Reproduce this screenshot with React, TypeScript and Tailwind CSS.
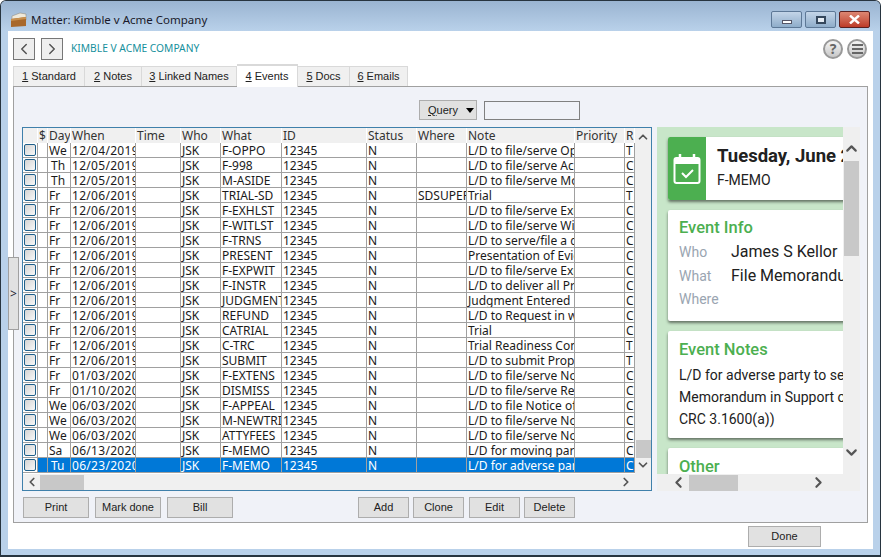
import { ChevronLeft, ChevronRight, ChevronUp, ChevronDown } from 'lucide-react'

const COLS = ['w-[15px]', 'w-[10px]', 'w-[23px]', 'w-[65px]', 'w-[45px]', 'w-[40px]', 'w-[61px]', 'w-[85px]', 'w-[50px]', 'w-[50px]', 'w-[108px]', 'w-[50px]', 'w-[10px]']

const HEAD = ['', '$', 'Day', 'When', 'Time', 'Who', 'What', 'ID', 'Status', 'Where', 'Note', 'Priority', 'R']

const EVENTS = [
  ['We', '12/04/2019', 'F-OPPO', '', 'L/D to file/serve Opposition', 'T'],
  ['Th', '12/05/2019', 'F-998', '', 'L/D to file/serve Acceptance', 'C'],
  ['Th', '12/05/2019', 'M-ASIDE', '', 'L/D to file/serve Motion', 'C'],
  ['Fr', '12/06/2019', 'TRIAL-SD', 'SDSUPERIOR', 'Trial', 'T'],
  ['Fr', '12/06/2019', 'F-EXHLST', '', 'L/D to file/serve Exhibit', 'C'],
  ['Fr', '12/06/2019', 'F-WITLST', '', 'L/D to file/serve Witness', 'C'],
  ['Fr', '12/06/2019', 'F-TRNS', '', 'L/D to serve/file a copy', 'C'],
  ['Fr', '12/06/2019', 'PRESENT', '', 'Presentation of Evidence', 'C'],
  ['Fr', '12/06/2019', 'F-EXPWIT', '', 'L/D to file/serve Expert', 'C'],
  ['Fr', '12/06/2019', 'F-INSTR', '', 'L/D to deliver all Proposed', 'C'],
  ['Fr', '12/06/2019', 'JUDGMENT', '', 'Judgment Entered', 'C'],
  ['Fr', '12/06/2019', 'REFUND', '', 'L/D to Request in writing', 'C'],
  ['Fr', '12/06/2019', 'CATRIAL', '', 'Trial', 'C'],
  ['Fr', '12/06/2019', 'C-TRC', '', 'Trial Readiness Conference', 'T'],
  ['Fr', '12/06/2019', 'SUBMIT', '', 'L/D to submit Proposed', 'T'],
  ['Fr', '01/03/2020', 'F-EXTENS', '', 'L/D to file/serve Notice', 'C'],
  ['Fr', '01/10/2020', 'DISMISS', '', 'L/D to file/serve Request', 'C'],
  ['We', '06/03/2020', 'F-APPEAL', '', 'L/D to file Notice of Appeal', 'C'],
  ['We', '06/03/2020', 'M-NEWTRIAL', '', 'L/D to file/serve Notice', 'C'],
  ['We', '06/03/2020', 'ATTYFEES', '', 'L/D to file/serve Notice', 'C'],
  ['Sa', '06/13/2020', 'F-MEMO', '', 'L/D for moving party', 'C'],
  ['Tu', '06/23/2020', 'F-MEMO', '', 'L/D for adverse party', 'C'],
]

const TABS = [
  { n: '1', label: 'Standard', w: 'w-[72px]' },
  { n: '2', label: 'Notes', w: 'w-[57px]' },
  { n: '3', label: 'Linked Names', w: 'w-[95px]' },
  { n: '4', label: 'Events', w: 'w-[61px]', active: true },
  { n: '5', label: 'Docs', w: 'w-[52px]' },
  { n: '6', label: 'Emails', w: 'w-[58px]' },
]

function Btn({ label, w }: { label: string; w: string }) {
  return (
    <button className={`${w} h-[21px] bg-[#e1e1e1] border border-[#adadad] font-['Liberation_Sans',sans-serif] text-[11px] text-[#222] flex items-center justify-center`}>
      {label}
    </button>
  )
}

function Cell({ text, i, selected }: { text: string; i: number; selected: boolean }) {
  const nudge = i === 2 && text.startsWith('T') ? 'pl-[3px]' : 'pl-[1px]'
  return (
    <div className={`${COLS[i]} shrink-0 overflow-hidden whitespace-nowrap border-r border-b border-[#a0a0a0] pt-[1px] ${nudge} leading-[14px] ${i === 3 ? 'tracking-[0.3px]' : ''} ${selected ? 'text-white' : ''}`}>
      {text}
    </div>
  )
}

function Card({ title, children, h, pt }: { title: string; children?: React.ReactNode; h: string; pt: string }) {
  return (
    <div className={`${h} ${pt} w-[240px] bg-white rounded-[2px] shadow-[0_2px_3px_rgba(0,0,0,0.5)] pl-[11px] shrink-0`}>
      <div className="text-[16.5px] leading-[20px] font-medium text-[#4caf50]">{title}</div>
      {children}
    </div>
  )
}

function GridTable() {
  return (
    <div className="w-[630px] h-[364px] shrink-0 border border-[#3f80ab] flex flex-col bg-[#f0f0f0] font-['Noto_Sans',sans-serif] text-[12px] text-[#1a1a1a]">
      <div className="flex flex-1 min-h-0">
        <div className="w-[612px] shrink-0 flex flex-col bg-white">
          <div className="flex h-[15px] bg-[#f0f0f0]">
            {HEAD.map((h, i) => (
              <div key={i} className={`${COLS[i]} shrink-0 overflow-hidden whitespace-nowrap border-r border-white pt-[1px] pl-[1px] leading-[14px] text-[#333]`}>{h}</div>
            ))}
          </div>
          {EVENTS.map((e, r) => {
            const selected = r === EVENTS.length - 1
            const vals = ['', '', e[0], e[1], '', 'JSK', e[2], '12345', 'N', e[3], e[4], '', e[5]]
            return (
              <div key={r} className={`flex h-[15px] ${selected ? 'bg-[#0078d7]' : ''}`}>
                {vals.map((v, i) => i === 0 ? (
                  <div key={i} className="w-[15px] shrink-0 bg-white border-r border-b border-[#a0a0a0] flex items-center justify-center">
                    <div className="w-[12px] h-[12px] rounded-[2px] border border-[#1f5f8a] bg-gradient-to-br from-[#d4d4d4] to-[#f8f8f8]" />
                  </div>
                ) : (
                  <Cell key={i} text={v} i={i} selected={selected} />
                ))}
              </div>
            )
          })}
        </div>
        <div className="flex-1 flex flex-col items-center bg-[#f0f0f0]">
          <ChevronUp size={14} strokeWidth={3} className="text-[#555] mt-[2px]" />
          <div className="flex-1" />
          <div className="w-[15px] h-[18px] bg-[#c8c8c8]" />
          <ChevronDown size={14} strokeWidth={3} className="text-[#555] mb-[2px]" />
        </div>
      </div>
      <div className="h-[16px] flex items-center">
        <ChevronLeft size={14} strokeWidth={3} className="text-[#555] ml-[2px]" />
        <div className="w-[44px] h-[15px] bg-[#c8c8c8] ml-[1px]" />
        <div className="flex-1" />
        <ChevronRight size={14} strokeWidth={3} className="text-[#555] mr-[18px]" />
      </div>
    </div>
  )
}

function SidePanel() {
  return (
    <div className="w-[203px] h-[364px] shrink-0 flex flex-col bg-[#efefef] font-['Roboto',sans-serif]">
      <div className="flex flex-1 min-h-0">
        <div className="w-[186px] shrink-0 bg-[#c8e6c9] overflow-hidden pl-[11px] pt-[10px] flex flex-col gap-[10px]">
          <div className="w-[240px] h-[63px] shrink-0 bg-white rounded-[2px] shadow-[0_2px_3px_rgba(0,0,0,0.5)] flex">
            <div className="w-[38px] shrink-0 bg-[#4caf50] rounded-l-[2px] flex items-center justify-center">
              <svg width="28" height="31" viewBox="0 0 28 31" fill="none" stroke="white" strokeWidth="2">
                <rect x="1.5" y="5" width="25" height="25" rx="2" />
                <path d="M1.5 8.5h25" strokeWidth="5" />
                <path d="M7 1v5M21 1v5" strokeWidth="2.5" />
                <path d="M9 20l4 4 7-7" strokeWidth="2" />
              </svg>
            </div>
            <div className="pl-[11px] pt-[7px] whitespace-nowrap">
              <div className="text-[18.5px] leading-[24px] font-bold text-[#212121]">Tuesday, June 23, 2020</div>
              <div className="text-[14px] leading-[20px] mt-[2px] text-[#212121]">F-MEMO</div>
            </div>
          </div>
          <Card title="Event Info" h="h-[111px]" pt="pt-[8px]">
            <div className="grid grid-cols-[52px_1fr] mt-[2px] whitespace-nowrap">
              <div className="text-[14px] leading-[24px] text-[#9aa5b1]">Who</div>
              <div className="text-[16px] leading-[24px] text-[#212121]">James S Kellor</div>
              <div className="text-[14px] leading-[24px] text-[#9aa5b1]">What</div>
              <div className="text-[16px] leading-[24px] text-[#212121]">File Memorandum</div>
              <div className="text-[14px] leading-[22px] text-[#9aa5b1]">Where</div>
            </div>
          </Card>
          <Card title="Event Notes" h="h-[107px]" pt="pt-[9px]">
            <div className="text-[14px] leading-[22px] mt-[4px] text-[#212121] whitespace-nowrap">
              <div>L/D for adverse party to serve</div>
              <div>Memorandum in Support of</div>
              <div>CRC 3.1600(a))</div>
            </div>
          </Card>
          <Card title="Other" h="h-[60px]" pt="pt-[9px]" />
        </div>
        <div className="flex-1 flex flex-col items-center">
          <ChevronUp size={17} strokeWidth={3} className="text-[#555] mt-[13px]" />
          <div className="w-[15px] h-[95px] bg-[#c8c8c8] mt-[4px]" />
          <div className="flex-1" />
          <ChevronDown size={17} strokeWidth={3} className="text-[#555] mb-[13px]" />
        </div>
      </div>
      <div className="h-[17px] flex items-center">
        <ChevronLeft size={17} strokeWidth={3} className="text-[#555] ml-[13px]" />
        <div className="w-[49px] h-[16px] bg-[#c8c8c8] ml-[2px]" />
        <div className="w-[72px]" />
        <ChevronRight size={17} strokeWidth={3} className="text-[#555]" />
      </div>
    </div>
  )
}

export default function App() {
  return (
    <div className="relative w-[881px] h-[557px] overflow-hidden rounded-t-[6px] border border-b-2 border-[#27343f] bg-[#b9d1ea] flex flex-col font-['Noto_Sans',sans-serif]">
      <div className="h-[30px] shrink-0 bg-gradient-to-b from-[#9ab4d1] to-[#b9d1ea] flex items-end pl-[10px] pr-[10px] pb-[3px]">
        <svg width="16" height="16" viewBox="0 0 16 16" className="shrink-0">
          <path d="M1 4l8-3 6 1v6H1z" fill="#efe9da" stroke="#8a8070" strokeWidth="0.5" />
          <path d="M0 7l15-2v9l-15 1z" fill="#a8682c" />
          <path d="M0 7l15-2v2L0 9z" fill="#c8904e" />
        </svg>
        <span className="ml-[4px] text-[11.5px] leading-[16px] text-[#1a1a2a]">Matter: Kimble v Acme Company</span>
        <div className="ml-auto flex gap-[3px] items-end">
          <div className="w-[31px] h-[17px] rounded-[2px] border border-[#5d7896] bg-gradient-to-b from-[#c3d5e8] to-[#8fadca] flex items-center justify-center">
            <div className="w-[10px] h-[4px] mt-[4px] bg-white border border-[#556]" />
          </div>
          <div className="w-[31px] h-[17px] rounded-[2px] border border-[#5d7896] bg-gradient-to-b from-[#c3d5e8] to-[#8fadca] flex items-center justify-center">
            <div className="w-[10px] h-[8px] bg-white/70 border-2 border-[#34475c]" />
          </div>
          <div className="w-[31px] h-[17px] rounded-[2px] border border-[#5a2020] bg-gradient-to-b from-[#dc8672] to-[#bd3a28] flex items-center justify-center">
            <svg width="11" height="9" viewBox="0 0 11 9" stroke="white" strokeWidth="2.4">
              <path d="M1 0.5l9 8M10 0.5l-9 8" />
            </svg>
          </div>
        </div>
      </div>

      <div className="flex-1 mx-[7px] mb-[6px] bg-white flex flex-col px-[5px] min-h-0">
        <div className="h-[35px] shrink-0 flex items-center pt-[1px]">
          <button className="w-[22px] h-[22px] bg-[#eee] border border-[#777] flex items-center justify-center">
            <ChevronLeft size={18} className="text-[#555]" />
          </button>
          <button className="w-[22px] h-[22px] ml-[6px] bg-[#eee] border border-[#777] flex items-center justify-center">
            <ChevronRight size={18} className="text-[#555]" />
          </button>
          <span className="ml-[8px] text-[10.25px] text-[#16909c]">KIMBLE V ACME COMPANY</span>
          <div className="ml-auto flex gap-[4px] mr-[1px]">
            <div className="w-[20px] h-[20px] rounded-full border-2 border-[#999] bg-gradient-to-b from-[#f5f5f5] to-[#c8c8c8] flex items-center justify-center text-[14px] font-bold text-[#666] leading-none">?</div>
            <div className="w-[20px] h-[20px] rounded-full border-2 border-[#999] bg-gradient-to-b from-[#f5f5f5] to-[#c8c8c8] flex flex-col items-center justify-center gap-[2px]">
              <div className="w-[11px] h-[2px] bg-[#666]" />
              <div className="w-[11px] h-[2px] bg-[#666]" />
              <div className="w-[11px] h-[2px] bg-[#666]" />
            </div>
          </div>
        </div>

        <div className="h-[20px] shrink-0 flex items-end relative z-10 font-['Liberation_Sans',sans-serif] text-[11px] text-[#222]">
          {TABS.map(t => (
            <div key={t.n} className={`${t.w} shrink-0 flex items-center justify-center border border-[#d9d9d9] border-l-0 first:border-l ${t.active ? 'h-[23px] bg-white -mb-[1px] border-b-0 border-l border-t-2 pb-[1px]' : 'h-[20px] bg-[#f0f0f0] border-b-0'}`}>
              <span><span className="underline">{t.n}</span> {t.label}</span>
            </div>
          ))}
        </div>

        <div className="h-[437px] shrink-0 border border-[#a0a0a0] bg-[#f0f2f8] pl-[8px] flex flex-col">
          <div className="h-[40px] shrink-0 flex items-start pt-[13px] pl-[397px] font-['Liberation_Sans',sans-serif] text-[11px]">
            <button className="w-[58px] h-[20px] bg-[#e1e1e1] border border-[#adadad] flex items-center pl-[8px] text-[#222]">
              <span><span className="underline">Q</span>uery</span>
              <span className="ml-[8px] w-0 h-0 border-l-[4px] border-r-[4px] border-t-[5px] border-l-transparent border-r-transparent border-t-black" />
            </button>
            <div className="ml-[7px] mt-[1px] w-[96px] h-[19px] border border-[#808080] bg-[#f0f2f8]" />
          </div>
          <div className="flex gap-[5px]">
            <GridTable />
            <SidePanel />
          </div>
          <div className="flex mt-[6px] ml-[1px] gap-[6px]">
            <Btn label="Print" w="w-[66px]" />
            <Btn label="Mark done" w="w-[66px]" />
            <Btn label="Bill" w="w-[66px]" />
            <div className="flex gap-[4px] ml-[119px]">
              <Btn label="Add" w="w-[51px]" />
              <Btn label="Clone" w="w-[51px]" />
              <div className="ml-[1px]"><Btn label="Edit" w="w-[51px]" /></div>
              <Btn label="Delete" w="w-[51px]" />
            </div>
          </div>
        </div>

        <div className="flex-1 flex items-center justify-end pr-[47px]">
          <Btn label="Done" w="w-[73px]" />
        </div>
      </div>

      <div className="absolute left-[7px] top-[256px] w-[11px] h-[73px] bg-[#e1e1e1] border border-[#a0a0a0] flex items-center justify-center text-[12px] text-[#223]">&gt;</div>
    </div>
  )
}
